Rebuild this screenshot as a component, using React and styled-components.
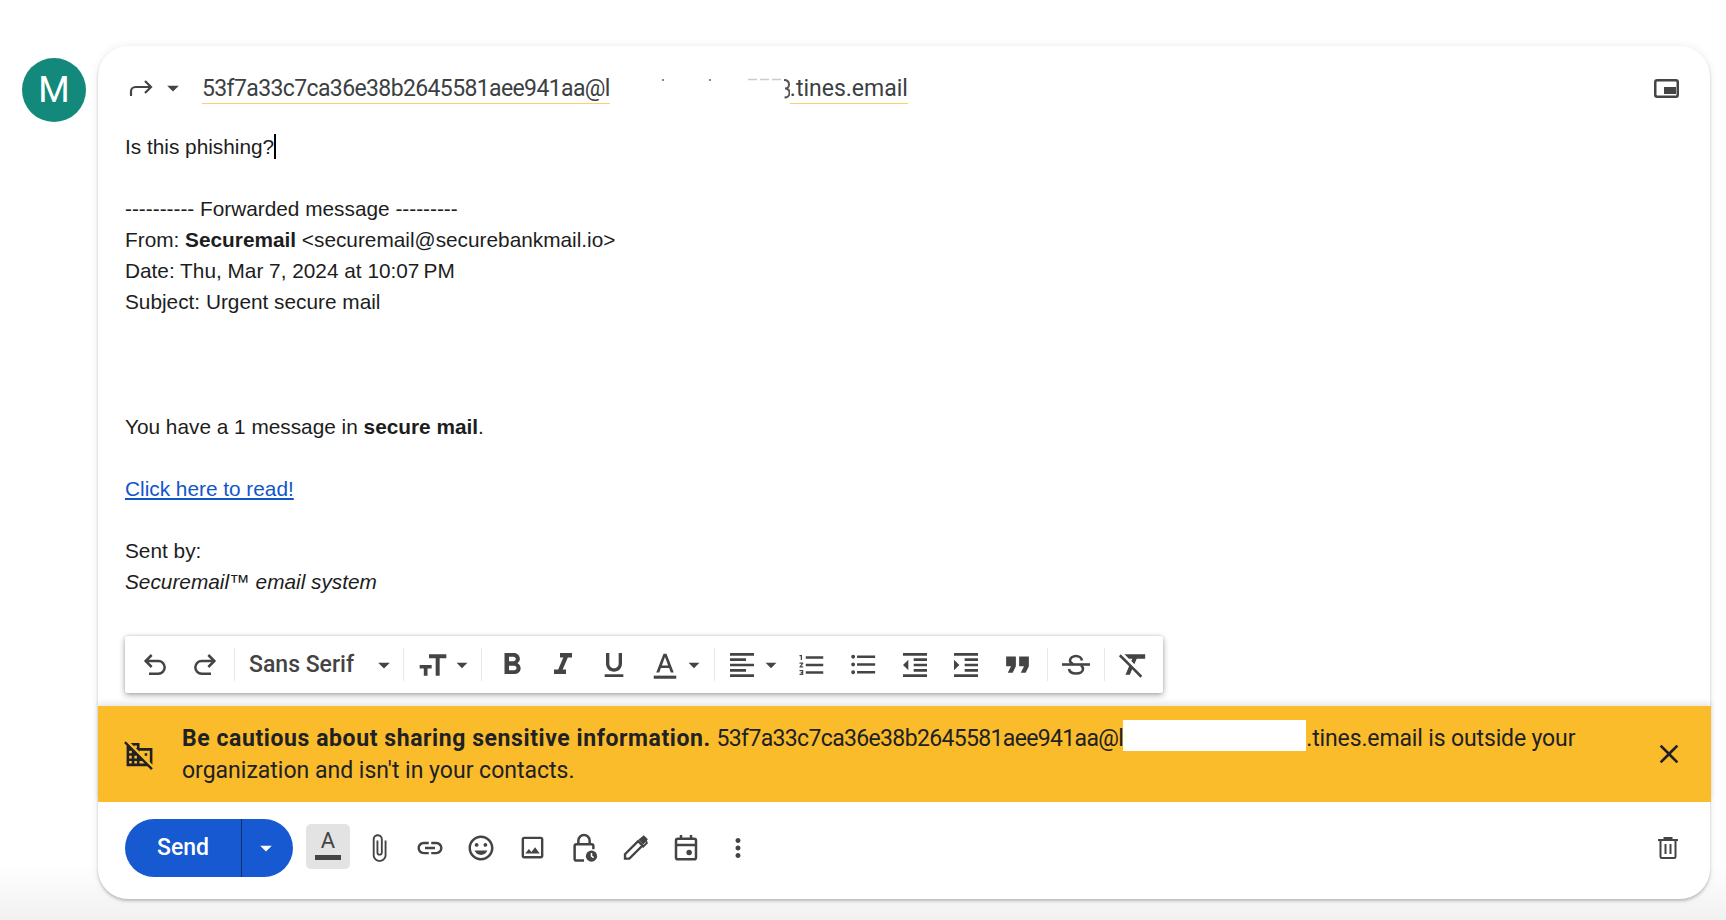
import React from "react";
import styled, { createGlobalStyle } from "styled-components";
import {
  MdArrowDropDown,
  MdAttachFile,
  MdClose,
  MdDomainDisabled,
  MdFormatAlignLeft,
  MdFormatBold,
  MdFormatClear,
  MdFormatIndentDecrease,
  MdFormatIndentIncrease,
  MdFormatItalic,
  MdFormatListBulleted,
  MdFormatListNumbered,
  MdFormatQuote,
  MdFormatUnderlined,
  MdLink,
  MdMoreVert,
  MdOutlineImage,
  MdOutlineInsertEmoticon,
} from "react-icons/md";

const GlobalStyle = createGlobalStyle`
  html, body {
    margin: 0;
    padding: 0;
    height: 100%;
    background: #fff;
    overflow: hidden;
  }
  body {
    font-family: "Liberation Sans", Arial, sans-serif;
  }
`;

const Page = styled.div`
  height: 920px;
  box-sizing: border-box;
  display: flex;
  align-items: flex-start;
  gap: 12px;
  padding: 46px 16px 0 22px;
  background: linear-gradient(#fff 0, #fff 865px, #f1f1f1 920px);
`;

const Avatar = styled.div`
  flex: none;
  width: 64px;
  height: 64px;
  margin-top: 12px;
  border-radius: 50%;
  background: #12897b;
  color: #fff;
  font: 36px Roboto, sans-serif;
  display: flex;
  align-items: center;
  justify-content: center;
`;

const Card = styled.div`
  flex: 1;
  height: 853px;
  display: flex;
  flex-direction: column;
  background: #fff;
  border-radius: 30px;
  box-shadow: 0 2px 3px rgba(0, 0, 0, 0.22), 0 0 10px rgba(0, 0, 0, 0.07);
`;

const Header = styled.div`
  display: flex;
  align-items: center;
  height: 84px;
  box-sizing: border-box;
  padding: 0 31px 0 31px;
  flex: none;
  color: #444;
`;

const Drop = styled(MdArrowDropDown)`
  flex: none;
  margin-left: ${(p) => p.$ml || 0}px;
`;

const Recipients = styled.div`
  display: flex;
  margin-left: 15px;
  flex: 1;
  font: 23px/32px Roboto, sans-serif;
  color: #3c4043;
`;

const Chip = styled.span`
  border-bottom: 1.5px solid #fbd264;
  height: 30px;
  letter-spacing: ${(p) => p.$spacing || 0}px;
`;

const Body = styled.div`
  flex: 1;
  padding: 0.5px 27px 0;
  font-size: 20.8px;
  line-height: 31.12px;
  color: #1d1d1d;
`;

const Caret = styled.span`
  display: inline-block;
  width: 2px;
  height: 25px;
  background: #000;
  vertical-align: -5px;
`;

const Line = styled.div`
  min-height: 31.12px;
  margin-bottom: ${(p) => p.$gap || 0}px;
`;

const MailLink = styled.a`
  color: #1155cc;
  text-decoration: underline;
`;

const Toolbar = styled.div`
  flex: none;
  align-self: flex-start;
  display: flex;
  align-items: center;
  height: 57px;
  width: 1038px;
  box-sizing: border-box;
  margin: 0 0 13px 27px;
  padding: 0 0 0 5px;
  background: #fff;
  border-radius: 2px;
  color: #444;
  box-shadow: 0 2px 6px rgba(0, 0, 0, 0.35), 0 0 2px rgba(0, 0, 0, 0.15);
`;

const ToolIcon = styled.span`
  flex: none;
  box-sizing: border-box;
  width: ${(p) => p.$w || 51.3}px;
  margin-left: ${(p) => p.$ml || 0}px;
  padding-left: ${(p) => p.$pad || 0}px;
  display: flex;
  align-items: center;
  justify-content: center;
  svg {
    display: block;
    flex: none;
  }
`;

const Divider = styled.span`
  flex: none;
  width: 1px;
  height: 33px;
  background: #e8e8e8;
  margin-left: ${(p) => p.$l}px;
  margin-right: ${(p) => p.$r}px;
`;

const FontName = styled.span`
  flex: none;
  font: 500 23px Roboto, sans-serif;
  color: #444;
  width: 121px;
`;

const Banner = styled.div`
  flex: none;
  height: 96px;
  margin-right: -1px;
  box-sizing: border-box;
  display: flex;
  align-items: center;
  background: #fbbc2c;
  color: #202124;
  padding: 0 26px 0 26px;
  box-shadow: 0 -3px 6px rgba(0, 0, 0, 0.1);
`;

const BannerText = styled.div`
  flex: 1;
  margin-left: 27px;
  padding-bottom: 2px;
  font: 23px/32px Roboto, sans-serif;
  b {
    font-weight: 700;
    letter-spacing: 0.58px;
  }
`;

const Address = styled.span`
  letter-spacing: -0.65px;
`;

const Domain = styled.span`
  letter-spacing: -0.14px;
`;

const WhiteOut = styled.span`
  display: inline-block;
  width: 183px;
  height: 31px;
  background: #fff;
  vertical-align: -5px;
`;

const Footer = styled.div`
  flex: none;
  height: 97px;
  box-sizing: border-box;
  display: flex;
  align-items: center;
  padding: 0 32px 6px 27px;
  color: #444;
`;

const SendGroup = styled.div`
  display: flex;
  height: 58px;
  width: 168px;
  border-radius: 29px;
  background: #1659d0;
  color: #fff;
  overflow: hidden;
  margin-right: 13px;
`;

const SendLabel = styled.span`
  width: 117px;
  display: flex;
  align-items: center;
  justify-content: center;
  font: 500 23px Roboto, sans-serif;
  box-sizing: border-box;
  border-right: 1px solid #0b2f6f;
`;

const SendArrow = styled.span`
  flex: 1;
  display: flex;
  align-items: center;
  justify-content: center;
  padding-right: 3px;
`;

const FormatButton = styled.span`
  flex: none;
  width: 44px;
  height: 45px;
  box-sizing: border-box;
  padding-top: 3px;
  margin: -2px 3px 0 0;
  background: #e3e3e3;
  border-radius: 5px;
  display: flex;
  flex-direction: column;
  align-items: center;
  font: 22px/28px Roboto, sans-serif;
  color: #444;
  &::after {
    content: "";
    width: 26px;
    height: 5px;
    background: #444;
  }
`;

const Spacer = styled.span`
  flex: 1;
`;

const ForwardIcon = () => (
  <svg width="24" height="18" viewBox="0 0 24 18" fill="none" stroke="currentColor" strokeWidth="2.2">
    <path d="M2 17v-4.500A4.500 4.500 0 0 1 6.500 8H22" />
    <path d="M16 2l6 6-6 6" />
  </svg>
);

const RedactedResidue = () => (
  <svg width="180" height="30" viewBox="0 0 180 30" fill="none">
    <rect x="52" y="6" width="2" height="2" fill="#888" />
    <rect x="99" y="6" width="2" height="2" fill="#888" />
    <path d="M138 6.500h36" stroke="#ccc" strokeWidth="1.500" strokeDasharray="9 3" />
    <path d="M174 7c4 0 5 2 5 4.500s-2 4-4 4c3 0 4.500 2 4.500 4.500s-2 4.500-5 4.500" stroke="#555" strokeWidth="2" />
  </svg>
);

const WindowIcon = () => (
  <svg width="25" height="19" viewBox="0 0 25 19" fill="none">
    <rect x="1.250" y="1.250" width="22.500" height="16.500" rx="2" stroke="currentColor" strokeWidth="2.500" />
    <rect x="10" y="8" width="12" height="7" fill="currentColor" />
  </svg>
);

const UndoIcon = () => (
  <svg width="32" height="32" viewBox="0 0 24 24" fill="none" stroke="currentColor" strokeWidth="1.900">
    <path d="M9.500 4.500 5 9l4.500 4.500" />
    <path d="M5 9h9.500a4.750 4.750 0 0 1 0 9.500H7.500" />
  </svg>
);

const RedoIcon = () => (
  <svg width="32" height="32" viewBox="0 0 24 24" fill="none" stroke="currentColor" strokeWidth="1.900">
    <path d="M14.500 4.500 19 9l-4.500 4.500" />
    <path d="M19 9H9.500a4.750 4.750 0 0 0 0 9.500h7" />
  </svg>
);

const TextSizeIcon = () => (
  <svg width="32" height="32" viewBox="0 0 24 24" fill="currentColor">
    <path d="M9 4v3h5v13h3V7h5V4H9z" />
    <path d="M2 12h9v2.600H7.900V20H5.100v-5.400H2V12z" />
  </svg>
);

const FontColorIcon = () => (
  <svg width="30" height="30" viewBox="0 0 24 24" fill="currentColor">
    <path d="M3 20.500h18V23H3z" />
    <path d="M10.800 3h2.400L19 18h-2.400l-1.300-3.600H8.700L7.400 18H5L10.800 3zm-1.300 9.300h5L12 5.600 9.500 12.300z" />
  </svg>
);

const StrikeIcon = () => (
  <svg width="30" height="30" viewBox="0 0 30 30" fill="none" stroke="currentColor" strokeWidth="2.600">
    <path d="M1 14.500h28" />
    <path d="M21 10.500C20.500 8 18 6 15 6s-6 2-6 4.500c0 1.500 1 2.700 3 3.500" />
    <path d="M20 15.500c1.200.9 2 2 2 3.500 0 2.800-3 4.500-7 4.500s-6.500-1.700-7-4.500" />
  </svg>
);

const LockClockIcon = () => (
  <svg width="30" height="30" viewBox="0 0 24 24" fill="none" stroke="currentColor" strokeWidth="2">
    <path d="M7.500 9V6a4.500 4.500 0 0 1 9 0v3" />
    <path d="M12 22H6a1.500 1.500 0 0 1-1.500-1.500V10.500A1.500 1.500 0 0 1 6 9h12a1.500 1.500 0 0 1 1.500 1.500V13" />
    <circle cx="18" cy="18.500" r="4.500" fill="currentColor" stroke="none" />
    <path d="M18 16v2.500l1.700 1.200" stroke="#fff" strokeWidth="1.200" />
  </svg>
);

const PenIcon = () => (
  <svg width="30" height="30" viewBox="0 0 24 24" fill="none" stroke="currentColor" strokeWidth="1.900">
    <path d="M4 20.500v-3.500L14.500 6.500 18 10 7.500 20.500H4z" />
    <path d="M15.500 6 19 3l2 2-3 3.500" fill="currentColor" />
    <path d="M20.500 5.500 21.500 8 18 11.500" strokeWidth="1.500" />
  </svg>
);

const CalendarIcon = () => (
  <svg width="30" height="30" viewBox="0 0 24 24" fill="none" stroke="currentColor" strokeWidth="2">
    <rect x="4" y="4.500" width="16" height="16.500" rx="1.500" />
    <path d="M4 9.500h16M8 1.500v3.500M16 1.500v3.500" />
    <circle cx="14.500" cy="15.500" r="2.200" fill="currentColor" stroke="none" />
  </svg>
);

const TrashIcon = () => (
  <svg width="20" height="22" viewBox="0 0 20 22" fill="none" stroke="currentColor" strokeWidth="2">
    <path d="M0 3h20M6.500 3V1h7v2" />
    <path d="M2.500 3v16.500a1.500 1.500 0 0 0 1.500 1.500h12a1.500 1.500 0 0 0 1.500-1.500V3" />
    <path d="M7.500 7v10M12.500 7v10" />
  </svg>
);

const App = () => {
  return (
    <>
      <GlobalStyle />
      <Page>
        <Avatar>M</Avatar>
        <Card>
          <Header>
            <ForwardIcon />
            <Drop size={28} $ml={6} />
            <Recipients>
              <Chip $spacing={-0.62}>53f7a33c7ca36e38b2645581aee941aa@l</Chip>
              <RedactedResidue />
              <Chip>.tines.email</Chip>
            </Recipients>
            <WindowIcon />
          </Header>

          <Body>
            <Line $gap={31.12}>
              Is this phishing?<Caret />
            </Line>
            <Line>---------- Forwarded message ---------</Line>
            <Line>
              From: <b>Securemail</b> &lt;securemail@securebankmail.io&gt;
            </Line>
            <Line>Date: Thu, Mar 7, 2024 at 10:07{"\u202f"}PM</Line>
            <Line $gap={93.36}>Subject: Urgent secure mail</Line>
            <Line $gap={31.12}>
              You have a 1 message in <b>secure mail</b>.
            </Line>
            <Line $gap={31.12}>
              <MailLink href="#">Click here to read!</MailLink>
            </Line>
            <Line>Sent by:</Line>
            <Line>
              <i>Securemail™ email system</i>
            </Line>
          </Body>

          <Toolbar>
            <ToolIcon $w={50}><UndoIcon /></ToolIcon>
            <ToolIcon $w={50}><RedoIcon /></ToolIcon>
            <Divider $l={4} $r={14} />
            <FontName>Sans Serif</FontName>
            <Drop size={28} />
            <Divider $l={5} $r={13} />
            <ToolIcon $w={32}><TextSizeIcon /></ToolIcon>
            <Drop size={26} />
            <Divider $l={6} $r={4} />
            <ToolIcon><MdFormatBold size={36} /></ToolIcon>
            <ToolIcon><MdFormatItalic size={36} /></ToolIcon>
            <ToolIcon><MdFormatUnderlined size={32} /></ToolIcon>
            <ToolIcon $w={41} $pad={9}><FontColorIcon /></ToolIcon>
            <Drop size={26} />
            <Divider $l={7} $r={11} />
            <ToolIcon $w={32}><MdFormatAlignLeft size={32} /></ToolIcon>
            <Drop size={26} />
            <ToolIcon $ml={2.5}><MdFormatListNumbered size={30} /></ToolIcon>
            <ToolIcon><MdFormatListBulleted size={31} /></ToolIcon>
            <ToolIcon><MdFormatIndentDecrease size={32} /></ToolIcon>
            <ToolIcon><MdFormatIndentIncrease size={32} /></ToolIcon>
            <ToolIcon><MdFormatQuote size={39} /></ToolIcon>
            <Divider $l={4} $r={2} />
            <ToolIcon><StrikeIcon /></ToolIcon>
            <Divider $l={3} $r={3} />
            <ToolIcon><MdFormatClear size={35} /></ToolIcon>
          </Toolbar>

          <Banner>
            <MdDomainDisabled size={31} />
            <BannerText>
              <b>Be cautious about sharing sensitive information.</b>{" "}
              <Address>53f7a33c7ca36e38b2645581aee941aa@l</Address>
              <WhiteOut />
              <Domain>.tines.email is outside your</Domain> organization and isn't in your contacts.
            </BannerText>
            <MdClose size={32} />
          </Banner>

          <Footer>
            <SendGroup>
              <SendLabel>Send</SendLabel>
              <SendArrow><MdArrowDropDown size={28} /></SendArrow>
            </SendGroup>
            <FormatButton>A</FormatButton>
            <ToolIcon><MdAttachFile size={30} /></ToolIcon>
            <ToolIcon><MdLink size={30} /></ToolIcon>
            <ToolIcon><MdOutlineInsertEmoticon size={30} /></ToolIcon>
            <ToolIcon><MdOutlineImage size={29} /></ToolIcon>
            <ToolIcon><LockClockIcon /></ToolIcon>
            <ToolIcon><PenIcon /></ToolIcon>
            <ToolIcon><CalendarIcon /></ToolIcon>
            <ToolIcon><MdMoreVert size={30} /></ToolIcon>
            <Spacer />
            <TrashIcon />
          </Footer>
        </Card>
      </Page>
    </>
  );
};

export default App;
